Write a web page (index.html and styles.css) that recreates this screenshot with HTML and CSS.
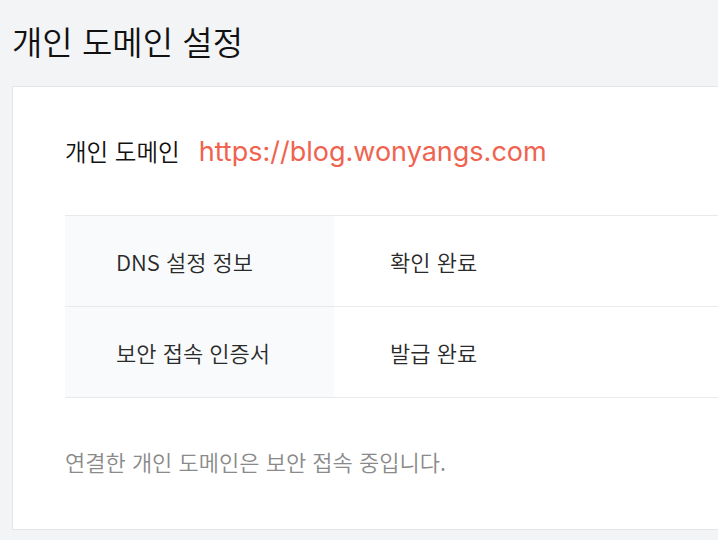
FILE: index.html
```html
<!DOCTYPE html>
<html lang="ko">
<head>
<meta charset="utf-8">
<link rel="stylesheet" href="styles.css">
</head>
<body>
<main class="page">
  <h1 class="title">개인 도메인 설정</h1>
  <section class="card">
    <div class="domain">
      <span class="domain-label">개인 도메인</span>
      <span class="domain-url">https://blog.wonyangs.com</span>
    </div>
    <div class="table">
      <div class="row">
        <div class="cell-key">DNS 설정 정보</div>
        <div class="cell-val">확인 완료</div>
      </div>
      <div class="row">
        <div class="cell-key">보안 접속 인증서</div>
        <div class="cell-val">발급 완료</div>
      </div>
    </div>
    <p class="note">연결한 개인 도메인은 보안 접속 중입니다.</p>
  </section>
</main>
</body>
</html>
```

FILE: styles.css
```css
html, body {
  margin: 0;
  padding: 0;
  background: #f3f4f6;
  overflow: hidden;
}
body {
  font-family: "Inter", "Noto Sans CJK KR", sans-serif;
  color: #1f1f1f;
}
.page {
  padding: 0 0 0 12px;
  width: 760px;
}
.title {
  margin: 0;
  height: 86px;
  line-height: 82px;
  font-size: 33px;
  font-weight: 350;
  color: #111;
  font-family: "Noto Sans CJK KR", sans-serif;
}
.card {
  background: #fff;
  border: 1px solid #e2e5ea;
  padding: 0 0 0 52px;
  height: 444px;
  box-sizing: border-box;
}
.domain {
  display: flex;
  align-items: center;
  gap: 19px;
  height: 128px;
}
.domain-label {
  font-family: "Noto Sans CJK KR", sans-serif;
  font-size: 23.5px;
  font-weight: 350;
  color: #111;
}
.domain-url {
  font-size: 27px;
  color: #f0634f;
}
.table {
  border-top: 1px solid #e8e9ec;
}
.row {
  display: flex;
  height: 90px;
  border-bottom: 1px solid #e8e9ec;
}
.cell-key {
  width: 269px;
  background: #f9fafb;
  padding-left: 51px;
  box-sizing: border-box;
  display: flex;
  align-items: center;
  font-family: "Noto Sans CJK KR", sans-serif;
  font-size: 22px;
  font-weight: 350;
  color: #2a2a2a;
}
.cell-val {
  padding-left: 56px;
  display: flex;
  align-items: center;
  font-family: "Noto Sans CJK KR", sans-serif;
  font-size: 22px;
  font-weight: 350;
  color: #2a2a2a;
}
.note {
  margin: 0;
  height: 130px;
  line-height: 126px;
  font-family: "Noto Sans CJK KR", sans-serif;
  font-size: 22px;
  font-weight: 350;
  color: #8a8a8a;
}
```
